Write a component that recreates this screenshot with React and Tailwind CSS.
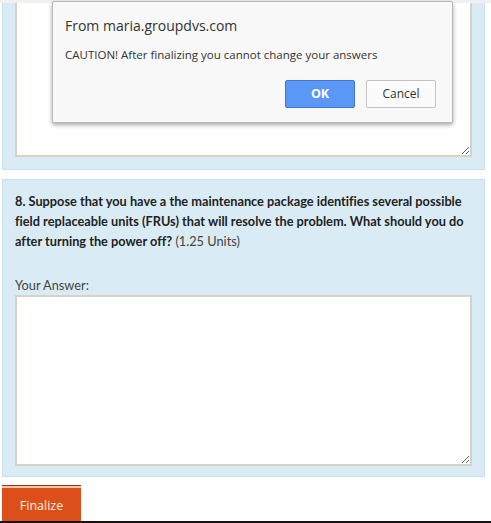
export default function App() {
  return (
    <div className="relative w-[491px] h-[523px] overflow-hidden bg-white">
      <div className="flex flex-col">
        {/* Panel 1 (cut at top) */}
        <div className="ml-[2px] w-[483px] h-[170px] bg-[#d9ecf5] border border-t-0 border-[#c6e2ee] px-[12px] pb-[12px] flex flex-col justify-end">
          <textarea
            readOnly
            className="block w-[457px] h-[160px] bg-white border-2 border-t-0 border-[#d6d3c5] outline-none"
          />
        </div>
        {/* Panel 2 */}
        <div className="mt-[9px] ml-[2px] w-[483px] h-[298px] bg-[#d9ecf5] border border-[#c6e2ee] px-[12px] pt-[11px] font-['Lato',sans-serif] text-[#222] [font-variant-ligatures:none]">
          <p className="text-[12.75px] leading-[20px]">
            <b className="font-bold">
              8. Suppose that you have a the maintenance package identifies several possible field replaceable units (FRUs) that will resolve the problem. What should you do after turning the power off?
            </b>
            <span className="text-[#444]"> (1.25 Units)</span>
          </p>
          <div className="mt-[26px] text-[12.75px] leading-[16px] text-[#444]">Your Answer:</div>
          <textarea
            readOnly
            className="block mt-[2px] w-[457px] h-[171px] bg-white border-2 border-[#d6d3c5] outline-none"
          />
        </div>
        {/* Finalize */}
        <div className="mt-[8px] ml-[2px] w-[79px] h-[36px] bg-[#dc4f1a] border-t border-[#a8300c] flex flex-col">
          <div className="h-[2px] bg-[#f3c6b0]" />
          <div className="flex-1 flex items-center justify-center pt-[4px] text-[#fff3e0] text-[12.5px] font-['Open_Sans',sans-serif]">
            Finalize
          </div>
        </div>
        <div className="h-[2px] bg-[#1a1010]" />
      </div>

      {/* top strip */}
      <div className="absolute left-0 top-0 w-full h-[3px] bg-[#f1f1f1]" />

      {/* Dialog */}
      <div className="absolute left-[52px] top-[1px] w-[401px] h-[122px] bg-[#f8f8f8] border border-[#b9b9b9] rounded-[2px] shadow-[0_2px_4px_rgba(0,0,0,0.35)] font-['Open_Sans',sans-serif]">
        <div className="pl-[12px] pt-[14px] text-[14px] leading-[20px] text-[#333]">From maria.groupdvs.com</div>
        <div className="pl-[12px] pt-[11px] text-[11.5px] leading-[16px] text-[#333]">
          CAUTION! After finalizing you cannot change your answers
        </div>
        <div className="flex justify-end gap-[11px] pr-[16px] pt-[17px]">
          <div className="w-[70px] h-[28px] bg-[#5b97f7] border border-[#3e78d6] rounded-[2px] flex items-center justify-center text-white font-bold text-[12.5px]">
            OK
          </div>
          <div className="w-[70px] h-[28px] bg-[#fbfbfb] border border-[#c4c4c4] rounded-[2px] flex items-center justify-center text-[#333] text-[12px]">
            Cancel
          </div>
        </div>
      </div>
    </div>
  );
}
